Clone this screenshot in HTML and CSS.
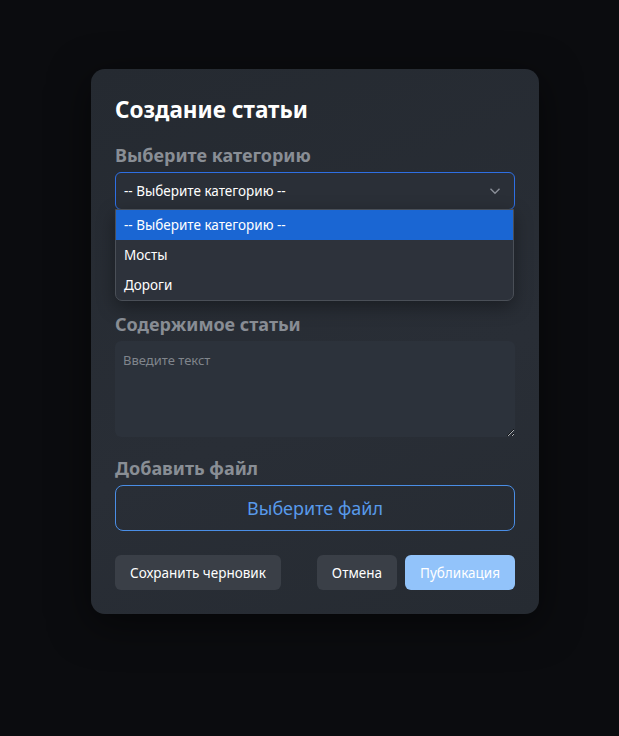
FILE: index.html
```html
<!DOCTYPE html>
<html lang="ru">
<head>
<meta charset="utf-8">
<title>Создание статьи</title>
<link rel="stylesheet" href="styles.css">
</head>
<body>
<div class="page">
  <form class="card">
    <h1 class="title">Создание статьи</h1>

    <div class="field select-field">
      <label class="label">Выберите категорию</label>
      <div class="select">
        <span>-- Выберите категорию --</span>
        <svg class="chevron" width="12" height="8" viewBox="0 0 12 8"><path d="M1.5 1.8 6 6.2l4.5-4.4" fill="none" stroke="#8a8f98" stroke-width="1.4"/></svg>
      </div>
      <ul class="dropdown">
        <li class="option active">-- Выберите категорию --</li>
        <li class="option">Мосты</li>
        <li class="option">Дороги</li>
      </ul>
    </div>

    <div class="field">
      <label class="label">Содержимое статьи</label>
      <textarea class="textarea" placeholder="Введите текст"></textarea>
    </div>

    <div class="field">
      <label class="label">Добавить файл</label>
      <button type="button" class="file-btn">Выберите файл</button>
    </div>

    <div class="actions">
      <button type="button" class="btn btn-secondary">Сохранить черновик</button>
      <div class="actions-right">
        <button type="button" class="btn btn-secondary">Отмена</button>
        <button type="button" class="btn btn-primary">Публикация</button>
      </div>
    </div>
  </form>
</div>
</body>
</html>
```
FILE: styles.css
```css
* { box-sizing: border-box; }
html, body { margin: 0; padding: 0; }
body {
  background: #0b0c0f;
  font-family: "Noto Sans", "Open Sans", sans-serif;
  color: #fff;
  width: 619px;
  height: 736px;
}
.page {
  display: flex;
  padding: 69px 0 0 91px;
}
.card {
  width: 448px;
  background: linear-gradient(160deg, #252a31 0%, #292e36 60%, #262b32 100%);
  border-radius: 14px;
  padding: 24px 24px 24px;
  box-shadow: 0 10px 40px rgba(0,0,0,0.5);
}
.title {
  margin: 0 0 15px;
  font-size: 22.5px;
  line-height: 34px;
  font-weight: 700;
  color: #fff;
}
.field {
  display: flex;
  flex-direction: column;
  margin-bottom: 18px;
}
.select-field {
  position: relative;
  margin-bottom: 101px;
}
.label {
  font-size: 18px;
  font-weight: 700;
  line-height: 27px;
  color: #898e95;
  margin-bottom: 3px;
}
.select {
  height: 38px;
  border: 1px solid #2e6fe3;
  border-radius: 6px;
  background: #2a2f37;
  display: flex;
  align-items: center;
  justify-content: space-between;
  padding: 0 13px 0 8px;
  font-size: 13.5px;
  color: #fff;
}
.chevron { display: block; }
.dropdown {
  position: absolute;
  left: 0;
  right: 1px;
  top: 67px;
  margin: 0;
  padding: 0;
  list-style: none;
  background: #2d323b;
  border: 1px solid #4a4f57;
  border-radius: 0 0 7px 7px;
  overflow: hidden;
  z-index: 5;
  box-shadow: 0 6px 18px rgba(0,0,0,0.35);
}
.option {
  height: 30px;
  line-height: 30px;
  padding: 0 8px;
  font-size: 13.5px;
  color: #fff;
}
.option.active { background: #1a66d3; }
.textarea {
  height: 96px;
  resize: vertical;
  border: none;
  border-radius: 6px;
  background: #2c323b;
  color: #fff;
  font-family: inherit;
  font-size: 13px;
  padding: 10px 8px;
  outline: none;
  color-scheme: dark;
}
.textarea::placeholder { color: #80858c; }
.file-btn {
  height: 46px;
  border: 1px solid #4a8ee6;
  border-radius: 8px;
  background: transparent;
  color: #589aea;
  font-family: inherit;
  font-size: 18px;
  cursor: pointer;
}
.actions {
  display: flex;
  justify-content: space-between;
  align-items: center;
  margin-top: 24px;
}
.actions-right { display: flex; gap: 8px; }
.btn {
  height: 35px;
  border: none;
  border-radius: 6px;
  padding: 0 15px;
  font-family: inherit;
  font-size: 13.5px;
  color: #fff;
  cursor: pointer;
}
.btn-secondary { background: #3a3f47; }
.btn-primary { background: #92c3fa; }
```
